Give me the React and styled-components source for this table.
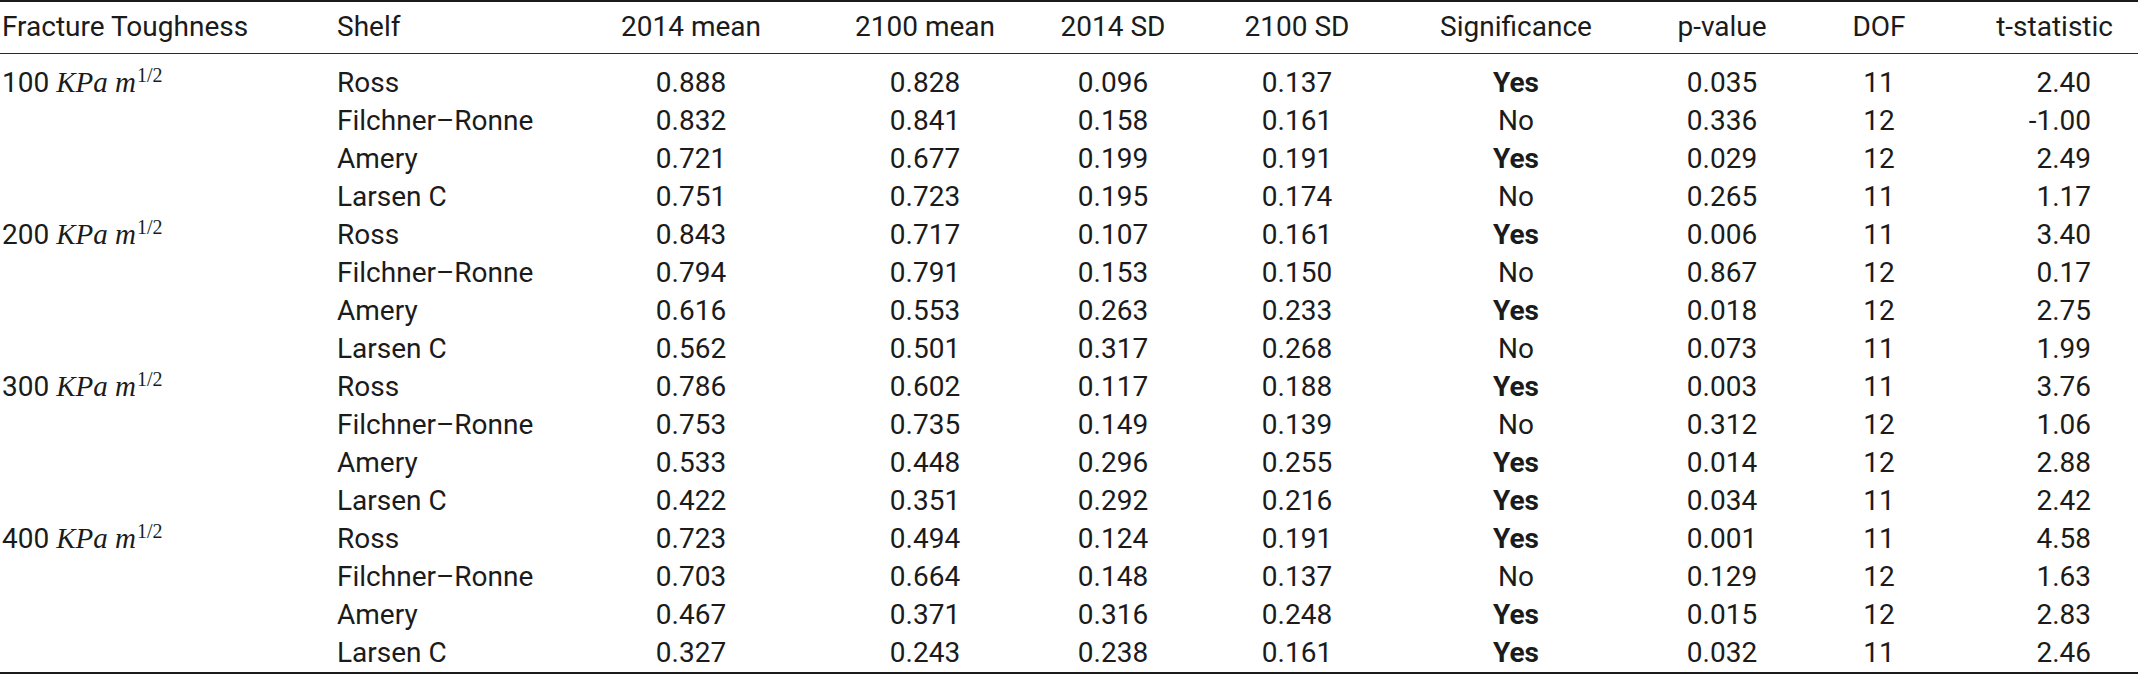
import React from 'react';
import styled, { createGlobalStyle } from 'styled-components';

const GlobalStyle = createGlobalStyle`
  html, body {
    margin: 0;
    padding: 0;
    background: #ffffff;
  }
  body {
    font-family: Roboto, "Liberation Sans", sans-serif;
    color: #1b1b1b;
  }
`;

const widths = [337, 253, 202, 266, 110, 258, 180, 232, 82, 218];

const Table = styled.table`
  width: 2138px;
  table-layout: fixed;
  border-collapse: collapse;
  font-size: 28px;
  line-height: 38px;
  border-top: 2px solid #1b1b1b;
  border-bottom: 2px solid #1b1b1b;
`;

const HeadRow = styled.tr`
  border-bottom: 1px solid #2a2a2a;
`;

const HeadCell = styled.th`
  font-weight: 400;
  padding: 6px ${(p) => (p.$align === 'right' ? '25px' : '0')} 7px ${(p) => (p.$first ? '2px' : '0')};
  text-align: ${(p) => p.$align || 'center'};
  white-space: nowrap;
`;

const Cell = styled.td`
  height: 38px;
  padding: ${(p) => (p.$top ? '10px' : '0')} ${(p) => (p.$align === 'right' ? '47px' : '0')} 0 ${(p) => (p.$first ? '2px' : '0')};
  text-align: ${(p) => p.$align || 'center'};
  vertical-align: top;
  white-space: nowrap;
  font-weight: ${(p) => (p.$bold ? 700 : 400)};
`;

const Math = styled.span`
  font-family: "Liberation Serif", "DejaVu Serif", serif;
  font-style: italic;
  font-size: 29px;
  line-height: 0;
`;

const Sup = styled.sup`
  font-style: normal;
  font-size: 20px;
  line-height: 0;
  vertical-align: 10px;
  margin-left: 1px;
`;

const headers = [
  ['Fracture Toughness', 'left'],
  ['Shelf', 'left'],
  ['2014 mean'],
  ['2100 mean'],
  ['2014 SD'],
  ['2100 SD'],
  ['Significance'],
  ['p-value'],
  ['DOF'],
  ['t-statistic', 'right'],
];

const shelves = ['Ross', 'Filchner–Ronne', 'Amery', 'Larsen C'];

const groups = [
  {
    kpa: 100,
    rows: [
      ['0.888', '0.828', '0.096', '0.137', true, '0.035', '11', '2.40'],
      ['0.832', '0.841', '0.158', '0.161', false, '0.336', '12', '-1.00'],
      ['0.721', '0.677', '0.199', '0.191', true, '0.029', '12', '2.49'],
      ['0.751', '0.723', '0.195', '0.174', false, '0.265', '11', '1.17'],
    ],
  },
  {
    kpa: 200,
    rows: [
      ['0.843', '0.717', '0.107', '0.161', true, '0.006', '11', '3.40'],
      ['0.794', '0.791', '0.153', '0.150', false, '0.867', '12', '0.17'],
      ['0.616', '0.553', '0.263', '0.233', true, '0.018', '12', '2.75'],
      ['0.562', '0.501', '0.317', '0.268', false, '0.073', '11', '1.99'],
    ],
  },
  {
    kpa: 300,
    rows: [
      ['0.786', '0.602', '0.117', '0.188', true, '0.003', '11', '3.76'],
      ['0.753', '0.735', '0.149', '0.139', false, '0.312', '12', '1.06'],
      ['0.533', '0.448', '0.296', '0.255', true, '0.014', '12', '2.88'],
      ['0.422', '0.351', '0.292', '0.216', true, '0.034', '11', '2.42'],
    ],
  },
  {
    kpa: 400,
    rows: [
      ['0.723', '0.494', '0.124', '0.191', true, '0.001', '11', '4.58'],
      ['0.703', '0.664', '0.148', '0.137', false, '0.129', '12', '1.63'],
      ['0.467', '0.371', '0.316', '0.248', true, '0.015', '12', '2.83'],
      ['0.327', '0.243', '0.238', '0.161', true, '0.032', '11', '2.46'],
    ],
  },
];

const App = () => {
  return (
    <>
      <GlobalStyle />
      <Table>
        <colgroup>
          {widths.map((w, i) => (
            <col key={i} style={{ width: w }} />
          ))}
        </colgroup>
        <thead>
          <HeadRow>
            {headers.map(([label, align], i) => (
              <HeadCell key={label} $align={align} $first={i === 0}>
                {label}
              </HeadCell>
            ))}
          </HeadRow>
        </thead>
        <tbody>
          {groups.map((g, gi) =>
            g.rows.map((r, ri) => {
              const top = gi === 0 && ri === 0;
              return (
                <tr key={`${g.kpa}-${ri}`}>
                  <Cell $align="left" $first $top={top}>
                    {ri === 0 && (
                      <>
                        {g.kpa}{' '}
                        <Math>
                          KPa m<Sup>1/2</Sup>
                        </Math>
                      </>
                    )}
                  </Cell>
                  <Cell $align="left" $top={top}>{shelves[ri]}</Cell>
                  <Cell $top={top}>{r[0]}</Cell>
                  <Cell $top={top}>{r[1]}</Cell>
                  <Cell $top={top}>{r[2]}</Cell>
                  <Cell $top={top}>{r[3]}</Cell>
                  <Cell $top={top} $bold={r[4]}>{r[4] ? 'Yes' : 'No'}</Cell>
                  <Cell $top={top}>{r[5]}</Cell>
                  <Cell $top={top}>{r[6]}</Cell>
                  <Cell $top={top} $align="right">{r[7]}</Cell>
                </tr>
              );
            })
          )}
        </tbody>
      </Table>
    </>
  );
};

export default App;
